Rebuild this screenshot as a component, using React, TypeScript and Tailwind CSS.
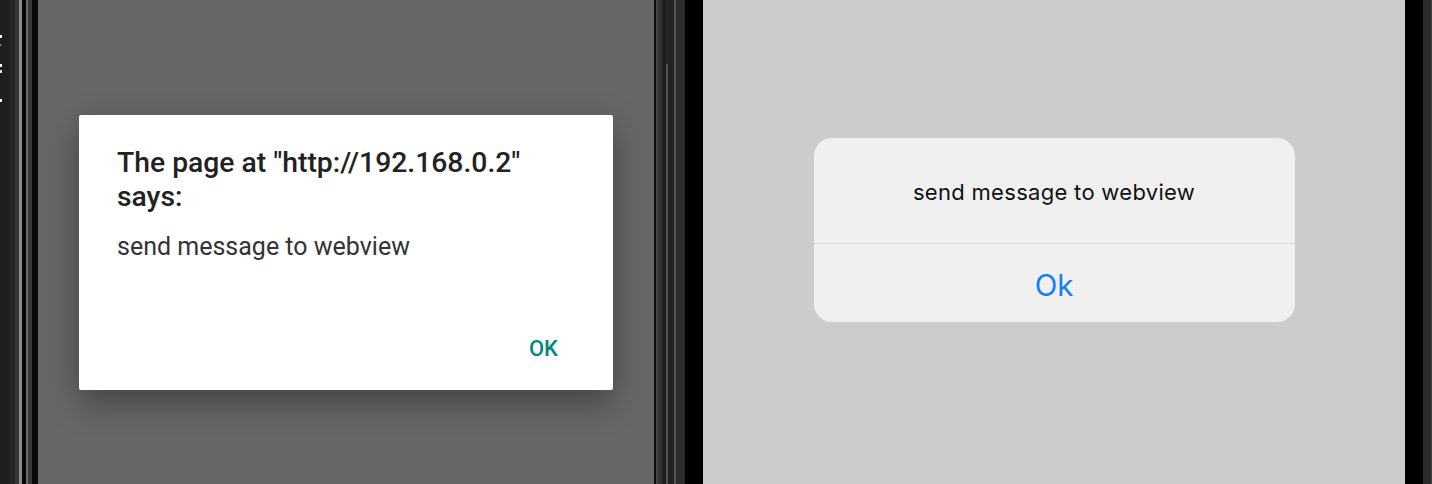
const androidFont = { fontFamily: 'Roboto, "Noto Sans", sans-serif' };
const iosFont = { fontFamily: 'Inter, "Noto Sans", sans-serif' };

const AndroidEdge = () => (
  <div className="flex h-full shrink-0">
    <div className="flex w-[9px] flex-col bg-[#1e1e1e]">
      <div className="mt-[35px] h-[3px] w-[2px] bg-white" />
      <div className="mt-[6px] h-[2px] w-[1px] bg-[#999]" />
      <div className="mt-[18px] h-[3px] w-[2px] bg-white" />
      <div className="mt-[3px] h-[3px] w-[2px] bg-[#ddd]" />
      <div className="mt-[26px] h-[3px] w-[2px] bg-white" />
    </div>
    <div className="w-[6px] bg-[#272727]" />
    <div className="w-[4px] bg-[#363636]" />
    <div className="w-[3px] bg-[#8c8c8c]" />
    <div className="w-[4px] bg-[#060606]" />
    <div className="w-[2px] bg-[#6c6c6c]" />
    <div className="w-[4px] bg-[#3a3a3a]" />
    <div className="w-[6px] bg-[#0a0a0a]" />
  </div>
);

const MiddleBezel = () => (
  <div className="flex h-full shrink-0">
    <div className="w-[2px] bg-[#0b0b0b]" />
    <div className="w-[2px] bg-[#474747]" />
    <div className="w-[4px] bg-[#333333]" />
    <div className="w-[4px] bg-[#1e1e1e]" />
    <div className="flex w-[2px] flex-col">
      <div className="h-[64px] bg-[#262626]" />
      <div className="flex-1 bg-[#555555]" />
    </div>
    <div className="w-[6px] bg-[#222222]" />
    <div className="w-[2px] bg-[#555555]" />
    <div className="w-[9px] bg-[#2c2c2c]" />
    <div className="w-[18px] bg-black" />
  </div>
);

const RightBezel = () => (
  <div className="flex h-full shrink-0">
    <div className="w-[18px] bg-black" />
    <div className="w-[8px] bg-[#2b2b2b]" />
    <div className="w-[1px] bg-[#444444]" />
  </div>
);

const AndroidAlert = () => (
  <div className="flex w-[616px] shrink-0 flex-col items-center bg-[#676767] pt-[115px]" style={androidFont}>
    <div className="flex h-[275px] w-[534px] flex-col rounded-[2px] bg-white shadow-[0_12px_32px_rgba(0,0,0,0.35)]">
      <div className="pl-[38px] pr-[38px] pt-[31px] text-[28.3px] font-medium leading-[34px] text-[#222222]">
        The page at "http://192.168.0.2" says:
      </div>
      <div className="pl-[38px] pt-[18px] text-[25px] leading-[30px] text-[#333333]">send message to webview</div>
      <div className="mt-auto flex justify-end pb-[27px] pr-[55px]">
        <span className="text-[22px] font-medium leading-[28px] text-[#00897b]">OK</span>
      </div>
    </div>
  </div>
);

const IosAlert = () => (
  <div className="flex flex-1 flex-col items-center bg-[#cccccc] pt-[138px]" style={iosFont}>
    <div className="flex h-[184px] w-[481px] flex-col overflow-hidden rounded-[18px] bg-[#f0f0f0]">
      <div className="flex h-[105px] items-center justify-center pt-[4px] text-[22px] tracking-[0.3px] text-[#111111]">
        send message to webview
      </div>
      <div className="h-px bg-[#d9d9d9]" />
      <div className="flex flex-1 items-center justify-center pt-[4px] text-[29.5px] text-[#147efb]">Ok</div>
    </div>
  </div>
);

export default function App() {
  return (
    <div className="flex h-[484px] w-[1432px] overflow-hidden bg-black">
      <AndroidEdge />
      <AndroidAlert />
      <MiddleBezel />
      <IosAlert />
      <RightBezel />
    </div>
  );
}
